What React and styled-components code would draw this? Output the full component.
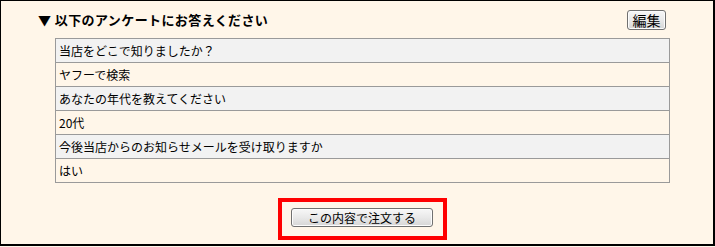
import styled, { createGlobalStyle } from "styled-components";

const GlobalStyle = createGlobalStyle`
  html, body {
    margin: 0;
    padding: 0;
    background: #fff6e9;
  }
  body {
    font-family: "Noto Sans CJK JP", "Liberation Sans", sans-serif;
    color: #000;
  }
`;

const Frame = styled.div`
  box-sizing: border-box;
  width: 715px;
  height: 246px;
  background: #fff6e9;
  border: 1px solid #000;
  border-right-width: 2px;
  border-bottom-width: 2px;
  padding-top: 9px;
`;

const Header = styled.div`
  display: flex;
  align-items: center;
  justify-content: space-between;
  height: 20px;
  padding: 0 47px 0 37px;
  h2 {
    margin: 0;
    font-size: 13px;
    font-weight: 700;
    line-height: 16px;
    letter-spacing: 0.4px;
  }
`;

const Button = styled.button`
  box-sizing: border-box;
  height: ${(p) => p.$h}px;
  width: ${(p) => p.$w}px;
  padding: 0;
  font-family: "Noto Sans CJK JP", "Liberation Sans", sans-serif;
  font-size: ${(p) => p.$fs}px;
  line-height: 1;
  color: #000;
  background: linear-gradient(#f7f7f7, #e9e9e9 50%, #d6d6d6);
  border: 1px solid #707070;
  border-radius: 3px;
  box-shadow: inset 0 0 0 1px #fcfcfc;
`;

const Table = styled.table`
  box-sizing: border-box;
  margin: 8px 0 0 54px;
  width: 615px;
  border-collapse: collapse;
  font-size: 12px;
  td {
    height: 23px;
    padding: 0 3px;
    border: 1px solid #9a9a9a;
    line-height: 14px;
    vertical-align: middle;
  }
`;

const Row = styled.tr`
  background: ${(p) => (p.$q ? "#f2f2f2" : "#fff6e9")};
`;

const Footer = styled.div`
  display: flex;
  justify-content: center;
  width: 615px;
  margin: 15px 0 0 54px;
`;

const Highlight = styled.div`
  display: flex;
  padding: 6px 10px 9px 9px;
  border: 4px solid #ff0000;
`;

const rows = [
  ["当店をどこで知りましたか？", "ヤフーで検索"],
  ["あなたの年代を教えてください", "20代"],
  ["今後当店からのお知らせメールを受け取りますか", "はい"],
];

export default function App() {
  return (
    <>
      <GlobalStyle />
      <Frame>
        <Header>
          <h2>▼ 以下のアンケートにお答えください</h2>
          <Button $w={39} $h={20} $fs={14}>編集</Button>
        </Header>
        <Table>
          <tbody>
            {rows.map(([q, a]) => [
              <Row key={q} $q>
                <td>{q}</td>
              </Row>,
              <Row key={a}>
                <td>{a}</td>
              </Row>,
            ])}
          </tbody>
        </Table>
        <Footer>
          <Highlight>
            <Button $w={142} $h={19} $fs={12}>この内容で注文する</Button>
          </Highlight>
        </Footer>
      </Frame>
    </>
  );
}
